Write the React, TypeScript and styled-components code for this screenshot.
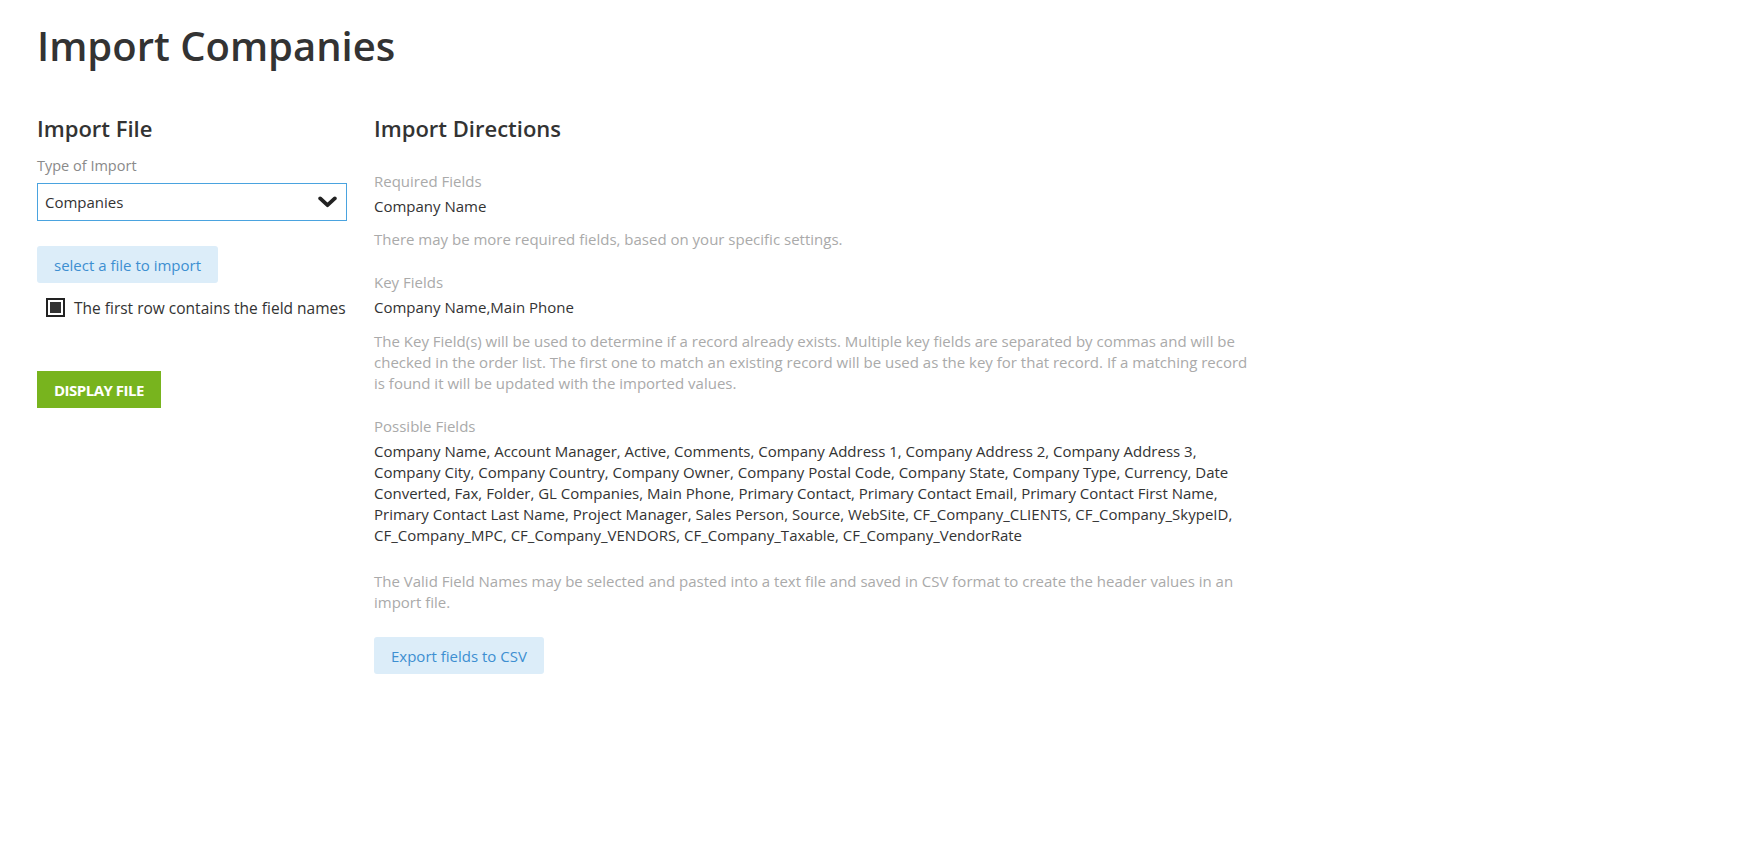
import React from 'react'
import styled, { createGlobalStyle } from 'styled-components'

const GlobalStyle = createGlobalStyle`
  html, body { margin: 0; padding: 0; background: #fff; }
  body { font-family: "Open Sans", "Liberation Sans", sans-serif; color: #333; }
`

const possibleFields = [
  'Company Name', 'Account Manager', 'Active', 'Comments', 'Company Address 1', 'Company Address 2',
  'Company Address 3', 'Company City', 'Company Country', 'Company Owner', 'Company Postal Code',
  'Company State', 'Company Type', 'Currency', 'Date Converted', 'Fax', 'Folder', 'GL Companies',
  'Main Phone', 'Primary Contact', 'Primary Contact Email', 'Primary Contact First Name',
  'Primary Contact Last Name', 'Project Manager', 'Sales Person', 'Source', 'WebSite',
  'CF_Company_CLIENTS', 'CF_Company_SkypeID', 'CF_Company_MPC', 'CF_Company_VENDORS',
  'CF_Company_Taxable', 'CF_Company_VendorRate'
]

const Page = styled.div`
  padding: 18px 37px 40px;
`
const Title = styled.h1`
  margin: 0;
  font-size: 40px;
  font-weight: 600;
  line-height: 56px;
  color: #333;
`
const Columns = styled.div`
  display: flex;
  gap: 27px;
  margin-top: 39px;
`
const LeftCol = styled.div`
  width: 310px;
  display: flex;
  flex-direction: column;
`
const RightCol = styled.div`
  width: 878px;
  display: flex;
  flex-direction: column;
`
const SectionTitle = styled.h2`
  margin: 0;
  font-size: 22px;
  font-weight: 600;
  line-height: 30px;
  color: #333;
`
const FieldLabel = styled.div`
  margin-top: 13px;
  font-size: 14.5px;
  line-height: 20px;
  color: #8a8a8a;
`
const SelectBox = styled.div`
  margin-top: 7px;
  height: 38px;
  box-sizing: border-box;
  border: 1px solid #4aa3df;
  display: flex;
  align-items: center;
  justify-content: space-between;
  padding: 0 9px 0 7px;
  font-size: 15px;
  color: #333;
`
const LightButton = styled.button<{ top: number }>`
  margin-top: ${p => p.top}px;
  align-self: flex-start;
  height: 37px;
  padding: 0 17px;
  border: none;
  border-radius: 3px;
  background: #dcedf9;
  color: #3d8fd1;
  font-family: inherit;
  font-size: 15px;
  cursor: pointer;
`
const CheckRow = styled.label`
  margin-top: 14px;
  margin-left: 9px;
  height: 21px;
  display: flex;
  align-items: center;
  gap: 9px;
  font-size: 15.5px;
  color: #333;
`
const CheckBox = styled.span`
  width: 19px;
  height: 19px;
  box-sizing: border-box;
  border: 2px solid #222;
  padding: 2px;
  display: flex;
  &::after {
    content: '';
    flex: 1;
    background: #333;
  }
`
const GreenButton = styled.button`
  margin-top: 53px;
  align-self: flex-start;
  height: 37px;
  padding: 0 17px;
  border: none;
  background: #78b41e;
  color: #fff;
  font-family: inherit;
  font-size: 15px;
  font-weight: 700;
  letter-spacing: -0.5px;
  text-transform: uppercase;
`
const Group = styled.div<{ top: number }>`
  margin-top: ${p => p.top}px;
  display: flex;
  flex-direction: column;
  gap: 4px;
`
const MutedLabel = styled.div`
  font-size: 15px;
  line-height: 21px;
  color: #aaa;
`
const Value = styled.div`
  font-size: 15px;
  line-height: 21px;
  color: #333;
`
const Note = styled.p<{ top: number }>`
  margin: ${p => p.top}px 0 0;
  font-size: 15px;
  line-height: 21px;
  color: #aaa;
`

const Chevron = () => (
  <svg width="19" height="12" viewBox="0 0 19 12">
    <path d="M2.2 2.4 L9.5 9.2 L16.8 2.4" fill="none" stroke="#222" strokeWidth="3.8" strokeLinecap="round" strokeLinejoin="round" />
  </svg>
)

export default function App() {
  return (
    <Page>
      <GlobalStyle />
      <Title>Import Companies</Title>
      <Columns>
        <LeftCol>
          <SectionTitle>Import File</SectionTitle>
          <FieldLabel>Type of Import</FieldLabel>
          <SelectBox>
            <span>Companies</span>
            <Chevron />
          </SelectBox>
          <LightButton top={25}>select a file to import</LightButton>
          <CheckRow>
            <CheckBox />
            The first row contains the field names
          </CheckRow>
          <GreenButton>Display File</GreenButton>
        </LeftCol>
        <RightCol>
          <SectionTitle>Import Directions</SectionTitle>
          <Group top={28}>
            <MutedLabel>Required Fields</MutedLabel>
            <Value>Company Name</Value>
          </Group>
          <Note top={12}>There may be more required fields, based on your specific settings.</Note>
          <Group top={22}>
            <MutedLabel>Key Fields</MutedLabel>
            <Value>Company Name,Main Phone</Value>
          </Group>
          <Note top={13}>
            The Key Field(s) will be used to determine if a record already exists. Multiple key fields are separated by commas and will be checked in the order list. The first one to match an existing record will be used as the key for that record. If a matching record is found it will be updated with the imported values.
          </Note>
          <Group top={22}>
            <MutedLabel>Possible Fields</MutedLabel>
            <Value>{possibleFields.join(', ')}</Value>
          </Group>
          <Note top={25}>
            The Valid Field Names may be selected and pasted into a text file and saved in CSV format to create the header values in an import file.
          </Note>
          <LightButton top={24}>Export fields to CSV</LightButton>
        </RightCol>
      </Columns>
    </Page>
  )
}
